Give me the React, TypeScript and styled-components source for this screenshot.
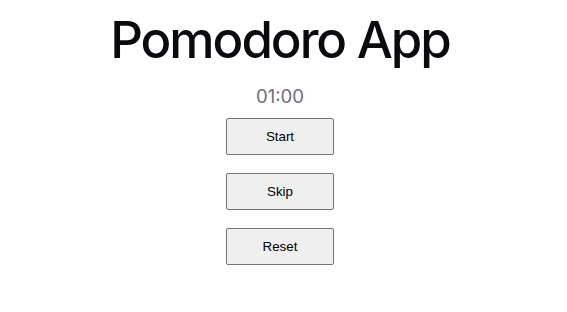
import React from 'react';
import styled, { createGlobalStyle } from 'styled-components';

const GlobalStyle = createGlobalStyle`
  body {
    margin: 0;
    background: #ffffff;
    font-family: 'Inter', 'Noto Sans', sans-serif;
  }
`;

const Page = styled.div`
  width: 560px;
  display: flex;
  flex-direction: column;
  align-items: center;
  padding-top: 9px;
`;

const Title = styled.h1`
  margin: 0;
  font-family: 'Inter', sans-serif;
  font-weight: 500;
  font-size: 51px;
  line-height: 62px;
  letter-spacing: -0.04em;
  color: #0b0b0f;
`;

const Timer = styled.div`
  margin-top: 13px;
  font-family: 'Inter', sans-serif;
  font-weight: 400;
  font-size: 18.5px;
  line-height: 24px;
  color: #6e6d7d;
`;

const Controls = styled.div`
  margin-top: 10px;
  display: flex;
  flex-direction: column;
  gap: 18px;
`;

const Button = styled.button`
  width: 108px;
  height: 37px;
  font-family: 'Liberation Sans', Arial, sans-serif;
  font-size: 13.33px;
  color: #000000;
  background: #efefef;
  border: 1px solid #767676;
  border-radius: 2px;
  padding: 0;
  cursor: pointer;
`;

const App: React.FC = function (): JSX.Element {
  return (
    <>
      <GlobalStyle />
      <Page>
        <Title>Pomodoro App</Title>
        <Timer>01:00</Timer>
        <Controls>
          <Button>Start</Button>
          <Button>Skip</Button>
          <Button>Reset</Button>
        </Controls>
      </Page>
    </>
  );
};

export default App;
